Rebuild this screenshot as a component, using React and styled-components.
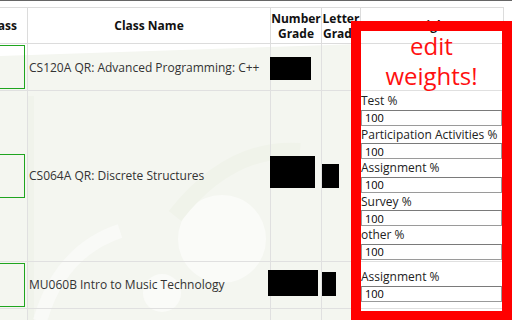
import React from "react";
import styled, { createGlobalStyle } from "styled-components";

const GlobalStyle = createGlobalStyle`
  html, body {
    margin: 0;
    padding: 0;
    overflow: hidden;
    background: #fff;
  }
  body {
    font-family: "Open Sans", "Noto Sans", sans-serif;
  }
`;

const Page = styled.div`
  position: relative;
  width: 512px;
  height: 320px;
  overflow: hidden;
  box-sizing: border-box;
  border-top: 1px solid #666;
  padding-top: 6px;
`;

// faint school logo behind the table
const Watermark = styled.svg`
  position: absolute;
  left: 0;
  top: 0;
  z-index: 0;
  pointer-events: none;
`;

const Table = styled.div`
  position: relative;
  z-index: 1;
  width: 504px;
`;

const Row = styled.div`
  display: grid;
  grid-template-columns: 28px 243px 51px 39px 143px;
`;

const HeadCell = styled.div`
  box-sizing: border-box;
  height: 37px;
  border-top: 1px solid #dcdcdc;
  border-bottom: 1px solid #dcdcdc;
  border-right: 1px solid #dcdcdc;
  display: flex;
  align-items: center;
  justify-content: ${(p) => (p.$end ? "flex-end" : "center")};
  padding-right: ${(p) => (p.$end ? "10px" : "0")};
  text-align: center;
  font-size: 12px;
  font-weight: 700;
  line-height: 15px;
  color: #111;
  overflow: hidden;
  white-space: ${(p) => (p.$end ? "nowrap" : "normal")};
`;

const Cell = styled.div`
  box-sizing: border-box;
  border-right: 1px solid #e0e0e0;
  border-bottom: 1px solid #e0e0e0;
  display: flex;
  align-items: center;
  padding: 1px 0 1px ${(p) => p.$pl || 0}px;
  font-size: 12px;
  color: #333;
  overflow: ${(p) => (p.$clip ? "hidden" : "visible")};
  white-space: nowrap;
`;

const ClassBox = styled.div`
  flex: 1;
  height: 44px;
  box-sizing: border-box;
  border: 1px solid #1fa51f;
  margin-right: 2px;
  margin-left: -20px;
`;

const Redact = styled.span`
  display: block;
  flex: none;
  background: #000;
  width: ${(p) => p.$w}px;
  height: ${(p) => p.$h}px;
  margin-left: ${(p) => p.$ml || 0}px;
  margin-top: ${(p) => p.$mt || 0}px;
  margin-bottom: ${(p) => p.$mb || 0}px;
`;

const WeightsCell = styled(Cell)`
  flex-direction: column;
  align-items: stretch;
  justify-content: center;
  padding: 1px 0;
`;

const WLabel = styled.div`
  font-size: 12px;
  line-height: 17.6px;
  color: #222;
  white-space: nowrap;
`;

const WInput = styled.input`
  box-sizing: border-box;
  display: block;
  width: calc(100% - 1px);
  height: 16px;
  margin: 0;
  padding: 0 3px;
  border: 1px solid #9a9a9a;
  border-top-color: #7a7a7a;
  font-family: inherit;
  font-size: 11px;
  color: #000;
  background: #fff;
  outline: none;
`;

const Callout = styled.div`
  position: absolute;
  left: 351px;
  top: 20px;
  width: 161px;
  height: 300px;
  box-sizing: border-box;
  border: 10px solid #ff0000;
  z-index: 2;
  padding: 0 16px;
  text-align: center;
  color: #ff1010;
  font-size: 24px;
  line-height: 30px;
`;

const rows = [
  {
    name: "CS120A QR: Advanced Programming: C++",
    num: { w: 41, h: 23, ml: -1, mt: 3 },
    letter: null,
    weights: [],
  },
  {
    name: "CS064A QR: Discrete Structures",
    num: { w: 45, h: 32, ml: -1, mb: 8 },
    letter: { w: 17, h: 24 },
    weights: [
      "Test %",
      "Participation Activities %",
      "Assignment %",
      "Survey %",
      "other %",
    ],
  },
  {
    name: "MU060B Intro to Music Technology",
    num: { w: 50, h: 26, ml: -3, mb: 4 },
    letter: { w: 14, h: 24, mb: 2 },
    weights: ["Assignment %"],
  },
  {
    name: "PE011A Fitness and Wellness",
    num: { w: 44, h: 26, ml: -1 },
    letter: { w: 14, h: 24 },
    weights: ["Assignment %", "Test %", "Participation %"],
  },
];

const App = () => {
  return (
    <>
      <GlobalStyle />
      <Page>
        <Watermark width="512" height="320" viewBox="0 0 512 320">
          <polygon points="0,55 360,43 360,320 0,320" fill="#f4f6f0" />
          <rect x="27" y="95" width="7" height="225" fill="#f0f3eb" />
          <circle cx="222" cy="238" r="44" fill="#fafbf8" />
          <circle cx="162" cy="292" r="19" fill="#fafbf8" />
          <path
            d="M175 215 Q230 145 300 150"
            stroke="#f0f3ea"
            strokeWidth="16"
            fill="none"
          />
          <path
            d="M40 320 Q60 250 120 230"
            stroke="#f9faf7"
            strokeWidth="14"
            fill="none"
          />
        </Watermark>
        <Table>
          <Row>
            <HeadCell $end>Class</HeadCell>
            <HeadCell>Class Name</HeadCell>
            <HeadCell>Number Grade</HeadCell>
            <HeadCell>Letter Grade</HeadCell>
            <HeadCell>Weights</HeadCell>
          </Row>
          {rows.map((r) => (
            <Row key={r.name}>
              <Cell $clip>
                <ClassBox />
              </Cell>
              <Cell $pl={1} $clip>
                {r.name}
              </Cell>
              <Cell>
                <Redact
                  $w={r.num.w}
                  $h={r.num.h}
                  $ml={r.num.ml}
                  $mt={r.num.mt}
                  $mb={r.num.mb}
                />
              </Cell>
              <Cell>
                {r.letter && (
                  <Redact $w={r.letter.w} $h={r.letter.h} $mb={r.letter.mb} />
                )}
              </Cell>
              <WeightsCell>
                {r.weights.map((w, i) => (
                  <React.Fragment key={w + i}>
                    <WLabel>{w}</WLabel>
                    <WInput defaultValue="100" />
                  </React.Fragment>
                ))}
              </WeightsCell>
            </Row>
          ))}
        </Table>
        <Callout>edit weights!</Callout>
      </Page>
    </>
  );
};

export default App;
